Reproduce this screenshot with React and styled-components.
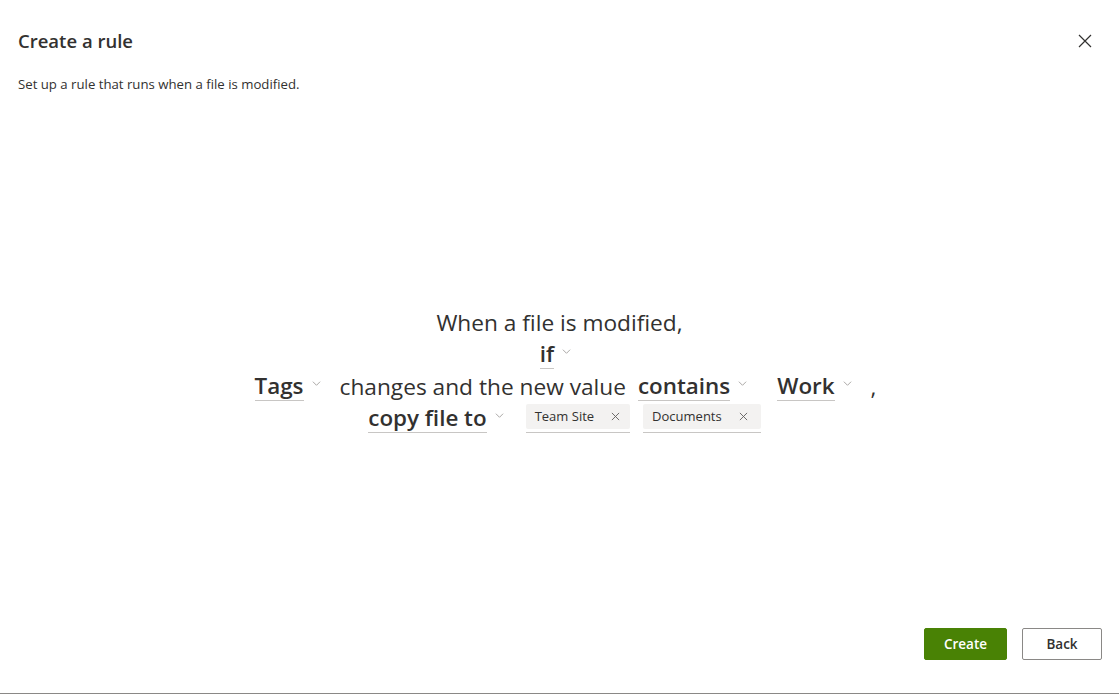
import styled, { createGlobalStyle } from 'styled-components';

const GlobalStyle = createGlobalStyle`
    html, body {
        margin: 0;
        padding: 0;
        background: #ffffff;
    }
    body {
        font-family: 'Segoe UI', 'Open Sans', 'Noto Sans', sans-serif;
        color: #323130;
    }
`;

const Panel = styled.div`
    height: 693px;
    border-bottom: 1px solid #8a8886;
    display: flex;
    flex-direction: column;
    background: #fff;
`;

const Header = styled.div`
    display: flex;
    justify-content: space-between;
    align-items: flex-start;
    padding: 27px 26px 0 18px;
`;

const Title = styled.h1`
    margin: 0;
    font-size: 18.5px;
    font-weight: 600;
    line-height: 28px;
    color: #323130;
`;

const CloseBtn = styled.button`
    border: none;
    background: none;
    padding: 0;
    margin-top: 6px;
    width: 16px;
    height: 16px;
    display: flex;
    align-items: center;
    justify-content: center;
    cursor: pointer;
`;

const Subtitle = styled.p`
    margin: 19px 0 0 18px;
    font-size: 13.2px;
    line-height: 20px;
    color: #323130;
`;

const Body = styled.div`
    flex: 1;
    display: flex;
    flex-direction: column;
    align-items: center;
    justify-content: center;
    padding-top: 18px;
`;

const Sentence = styled.div`
    display: flex;
    flex-direction: column;
    align-items: center;
    font-size: 22.7px;
    color: #323130;
`;

const Line = styled.div`
    display: flex;
    align-items: center;
    justify-content: center;
    height: 32px;
    white-space: nowrap;
    padding-left: ${(p) => p.$left || 0}px;
    padding-right: ${(p) => p.$right || 0}px;
`;

const Plain = styled.span`
    margin: 0 ${(p) => p.$gap || 0}px 0 0;
`;

const Drop = styled.span`
    display: inline-flex;
    align-items: center;
    margin-right: ${(p) => p.$gap || 0}px;
    cursor: pointer;
`;

const DropWord = styled.span`
    font-size: 22.4px;
    font-weight: 600;
    line-height: 28px;
    border-bottom: 1px solid #c8c6c4;
`;

const Chevron = styled.svg`
    width: 9px;
    height: 9px;
    margin-left: 8px;
    margin-top: -6px;
`;

const Chip = styled.span`
    display: inline-flex;
    align-items: center;
    margin-right: ${(p) => p.$gap || 0}px;
    padding: 0 0 3px;
    border-bottom: 1px solid #c8c6c4;
`;

const ChipInner = styled.span`
    display: inline-flex;
    align-items: center;
    height: 25px;
    padding: 0 ${(p) => p.$pad || 10}px 0 9px;
    background: #f3f2f1;
    border-radius: 2px;
    font-size: 13px;
    color: #323130;
`;

const ChipX = styled.svg`
    width: 9px;
    height: 9px;
    margin-left: 17px;
`;

const Footer = styled.div`
    display: flex;
    justify-content: flex-end;
    gap: 15px;
    padding: 0 17px 33px 0;
`;

const Button = styled.button`
    height: 32px;
    min-width: ${(p) => p.$w}px;
    padding: 0 16px;
    border-radius: 2px;
    font-family: inherit;
    font-size: 13.5px;
    font-weight: 600;
    cursor: pointer;
    border: 1px solid ${(p) => (p.$primary ? '#498205' : '#8a8886')};
    background: ${(p) => (p.$primary ? '#498205' : '#ffffff')};
    color: ${(p) => (p.$primary ? '#ffffff' : '#323130')};
`;

function ChevronDown() {
    return (
        <Chevron viewBox="0 0 10 10">
            <path d="M1 3l4 4 4-4" fill="none" stroke="#a19f9d" strokeWidth="1" />
        </Chevron>
    );
}

function Dropdown({ label, gap }) {
    return (
        <Drop $gap={gap}>
            <DropWord>{label}</DropWord>
            <ChevronDown />
        </Drop>
    );
}

function Tag({ label, gap, pad }) {
    return (
        <Chip $gap={gap}>
            <ChipInner $pad={pad}>
                {label}
                <ChipX viewBox="0 0 10 10">
                    <path d="M1 1l8 8M9 1l-8 8" stroke="#605e5c" strokeWidth="1" />
                </ChipX>
            </ChipInner>
        </Chip>
    );
}

export default function App() {
    return (
        <>
            <GlobalStyle />
            <Panel>
                <Header>
                    <Title>Create a rule</Title>
                    <CloseBtn aria-label="Close">
                        <svg width="14" height="14" viewBox="0 0 14 14">
                            <path d="M1 1l12 12M13 1L1 13" stroke="#323130" strokeWidth="1.2" />
                        </svg>
                    </CloseBtn>
                </Header>
                <Subtitle>Set up a rule that runs when a file is modified.</Subtitle>

                <Body>
                    <Sentence>
                        <Line>When a file is modified,</Line>
                        <Line $right={8}>
                            <Dropdown label="if" />
                        </Line>
                        <Line $left={12}>
                            <Dropdown label="Tags" gap={19} />
                            <Plain $gap={12}>changes and the new value</Plain>
                            <Dropdown label="contains" gap={30} />
                            <Dropdown label="Work" gap={19} />
                            <Plain>,</Plain>
                        </Line>
                        <Line $left={10}>
                            <Dropdown label="copy file to" gap={22} />
                            <Tag label="Team Site" gap={13} />
                            <Tag label="Documents" pad={13} />
                        </Line>
                    </Sentence>
                </Body>

                <Footer>
                    <Button $primary $w={83}>Create</Button>
                    <Button $w={80}>Back</Button>
                </Footer>
            </Panel>
        </>
    );
}
